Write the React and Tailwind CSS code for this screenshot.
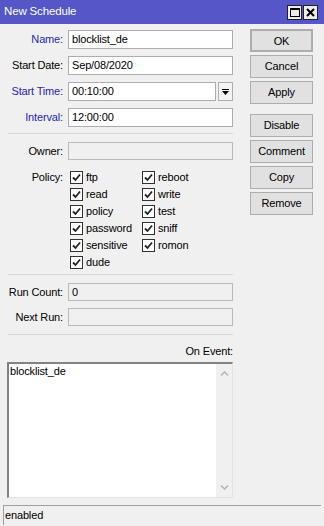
import { Fragment } from 'react';

const field = 'h-[19px] w-[165px] border border-[#abadb3] bg-white px-[3px] leading-[17px] text-black';
const idle = 'h-[18px] w-[165px] border border-[#b9b9b9] bg-[#f0f0f0] px-[3px] leading-[16px] text-black';
const btn = 'h-[23px] w-[63px] border border-[#adadad] bg-[#e1e1e1] text-center leading-[21px] text-black';

const policies = [
  ['ftp', 'reboot'],
  ['read', 'write'],
  ['policy', 'test'],
  ['password', 'sniff'],
  ['sensitive', 'romon'],
  ['dude', null],
];

function Check({ label }) {
  return (
    <div className="flex h-[17px] w-[72px] items-center gap-[3px]">
      <span className="flex h-[13px] w-[13px] items-center justify-center border border-[#333] bg-white">
        <svg width="9" height="9" viewBox="0 0 9 9">
          <polyline points="1,4.5 3.5,7 8,1.5" fill="none" stroke="#222" strokeWidth="1.8" />
        </svg>
      </span>
      <span>{label}</span>
    </div>
  );
}

function Label({ children, blue }) {
  return <span className={`text-right ${blue ? 'text-[#2626b8]' : 'text-black'}`}>{children}</span>;
}

function Rule() {
  return <div className="ml-[8px] h-px w-[225px] bg-[#d9d9d9]" />;
}

export default function App() {
  return (
    <div
      className="flex h-[526px] w-[324px] flex-col overflow-hidden bg-[#f0f0f0] text-[11px] tracking-[-0.15px] text-black"
      style={{ fontFamily: '"Liberation Sans", Arial, sans-serif' }}
    >
      <div className="flex h-[24px] shrink-0 items-center justify-between bg-[#5656c8] pl-[4px] pr-[6px]">
        <span className="text-[11.5px] text-white">New Schedule</span>
        <div className="flex gap-px">
          <span className="flex h-[15px] w-[15px] items-center justify-center border border-[#222] bg-[#ececec]">
            <span className="h-[9px] w-[10px] border border-t-2 border-black" />
          </span>
          <span className="flex h-[15px] w-[15px] items-center justify-center border border-[#222] bg-[#ececec]">
            <svg width="9" height="9" viewBox="0 0 9 9">
              <path d="M1 1L8 8M8 1L1 8" stroke="#000" strokeWidth="2" />
            </svg>
          </span>
        </div>
      </div>

      <div className="flex flex-1">
        <div className="flex w-[233px] flex-col">
          <div className="mt-[6px] grid grid-cols-[63px_165px] items-center gap-x-[5px] gap-y-[7px]">
            <Label blue>Name:</Label>
            <div className={field}>blocklist_de</div>
            <Label>Start Date:</Label>
            <div className={field}>Sep/08/2020</div>
            <Label blue>Start Time:</Label>
            <div className="flex gap-[2px]">
              <div className={`${field} w-[147px]`}>00:10:00</div>
              <div className="flex h-[19px] w-[16px] flex-col items-center justify-center gap-px border border-[#abadb3] bg-[#f4f4f4]">
                <span className="h-px w-[7px] bg-black" />
                <svg width="7" height="4" viewBox="0 0 7 4">
                  <path d="M0 0H7L3.5 4Z" fill="#000" />
                </svg>
              </div>
            </div>
            <Label blue>Interval:</Label>
            <div className={field}>12:00:00</div>
          </div>

          <div className="mt-[6px]">
            <Rule />
          </div>

          <div className="mt-[8px] grid grid-cols-[63px_165px] items-center gap-x-[5px]">
            <Label>Owner:</Label>
            <div className={idle} />
          </div>

          <div className="mt-[9px] grid grid-cols-[63px_165px] items-start gap-x-[5px]">
            <span className="text-right leading-[17px]">Policy:</span>
            <div className="flex flex-col pl-[2px]">
              {policies.map(([a, b]) => (
                <div key={a} className="flex">
                  <Check label={a} />
                  {b && <Check label={b} />}
                </div>
              ))}
            </div>
          </div>

          <div className="mt-[3px]">
            <Rule />
          </div>

          <div className="mt-[8px] grid grid-cols-[63px_165px] items-center gap-x-[5px] gap-y-[7px]">
            <Label>Run Count:</Label>
            <div className={idle}>0</div>
            <Label>Next Run:</Label>
            <div className={idle} />
          </div>

          <div className="mt-[8px]">
            <Rule />
          </div>

          <div className="mt-[10px] text-right leading-[13px]">On Event:</div>

          <div className="ml-[7px] mt-[4px] flex h-[136px] w-[226px] border-b border-l-2 border-r border-t-2 border-b-[#e3e3e3] border-l-[#828282] border-r-[#e3e3e3] border-t-[#828282] bg-white">
            <div className="flex-1 pl-[1px] pt-[1px] leading-[13px]">blocklist_de</div>
            <div className="flex w-[16px] flex-col items-center justify-between bg-[#f0f0f0] py-[7px]">
              <svg width="9" height="5" viewBox="0 0 9 5">
                <path d="M1 4.5L4.5 1L8 4.5" fill="none" stroke="#b0b0b0" strokeWidth="1.3" />
              </svg>
              <svg width="9" height="5" viewBox="0 0 9 5">
                <path d="M1 0.5L4.5 4L8 0.5" fill="none" stroke="#b0b0b0" strokeWidth="1.3" />
              </svg>
            </div>
          </div>
        </div>

        <div className="ml-[17px] mt-[5px] flex flex-col">
          <div className={`${btn} border-2 border-[#1e1e1e] leading-[19px]`}>OK</div>
          <div className={`${btn} mt-[3px]`}>Cancel</div>
          <div className={`${btn} mt-[3px]`}>Apply</div>
          <div className={`${btn} mt-[10px]`}>Disable</div>
          <div className={`${btn} mt-[3px]`}>Comment</div>
          <div className={`${btn} mt-[3px]`}>Copy</div>
          <div className={`${btn} mt-[3px]`}>Remove</div>
        </div>
      </div>

      <div className="mx-[3px] mb-[3px] mt-[7px] h-[20px] shrink-0 border-l border-t border-l-[#a0a0a0] border-t-[#a0a0a0] pl-[1px] leading-[19px]">
        enabled
      </div>
    </div>
  );
}
